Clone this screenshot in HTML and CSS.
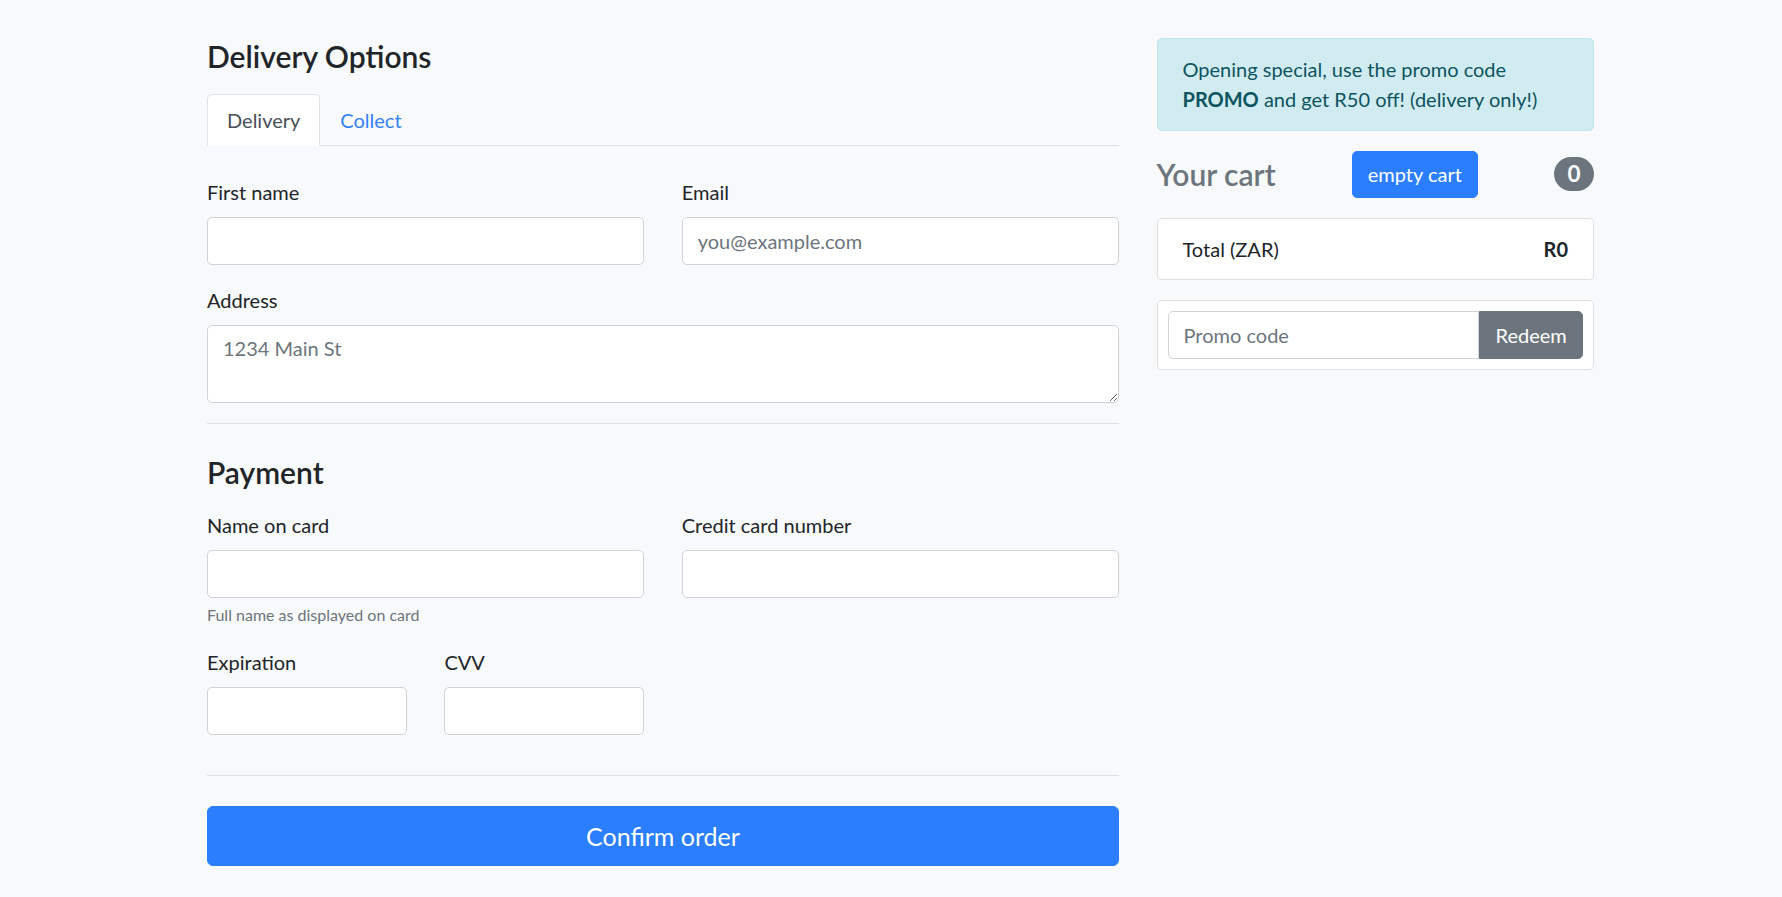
FILE: index.html
```html
<!DOCTYPE html>
<html lang="en">
<head>
<meta charset="utf-8">
<title>Checkout</title>
<link rel="stylesheet" href="styles.css">
</head>
<body>
<div class="page">
  <main class="main-col">
    <h4 class="section-title">Delivery Options</h4>
    <nav class="tabs">
      <a class="tab active">Delivery</a>
      <a class="tab">Collect</a>
    </nav>
    <form class="tab-content">
      <div class="row two">
        <div class="field">
          <label>First name</label>
          <input class="input" type="text">
        </div>
        <div class="field">
          <label>Email</label>
          <input class="input" type="email" placeholder="you@example.com">
        </div>
      </div>
      <div class="field">
        <label>Address</label>
        <textarea class="input textarea" rows="2" placeholder="1234 Main St"></textarea>
      </div>
      <hr class="divider">
      <h4 class="section-title">Payment</h4>
      <div class="row two">
        <div class="field">
          <label>Name on card</label>
          <input class="input" type="text">
          <small class="help">Full name as displayed on card</small>
        </div>
        <div class="field">
          <label>Credit card number</label>
          <input class="input" type="text">
        </div>
      </div>
      <div class="row four">
        <div class="field">
          <label>Expiration</label>
          <input class="input" type="text">
        </div>
        <div class="field">
          <label>CVV</label>
          <input class="input" type="text">
        </div>
      </div>
      <hr class="divider">
      <button class="btn btn-primary btn-lg" type="button">Confirm order</button>
    </form>
  </main>
  <aside class="side-col">
    <div class="alert">Opening special, use the promo code <strong>PROMO</strong> and get R50 off! (delivery only!)</div>
    <h4 class="cart-head">
      <span class="muted">Your cart</span>
      <button class="btn btn-primary" type="button">empty cart</button>
      <span class="badge">0</span>
    </h4>
    <ul class="list-group">
      <li class="list-item"><span>Total (ZAR)</span><strong>R0</strong></li>
    </ul>
    <div class="card">
      <div class="input-group">
        <input class="input promo" type="text" placeholder="Promo code">
        <button class="btn btn-secondary redeem" type="button">Redeem</button>
      </div>
    </div>
  </aside>
</div>
</body>
</html>
```
FILE: styles.css
```css
* { box-sizing: border-box; }
html, body { margin: 0; }
body {
  background: #f8f9fa;
  color: #212529;
  font-family: Lato, "Open Sans", "Noto Sans", sans-serif;
  font-size: 20px;
  line-height: 30px;
}
.page {
  display: grid;
  grid-template-columns: 912px 437.5px;
  column-gap: 37.5px;
  align-items: start;
  margin: 0 0 0 207px;
  padding-top: 38px;
  width: 1387px;
}
.section-title {
  margin: 0 0 20px;
  font-size: 30px;
  line-height: 36px;
  font-weight: 600;
}
.tabs {
  display: flex;
  border-bottom: 1px solid #dee2e6;
}
.tab {
  display: block;
  padding: 10px 19px;
  border: 1px solid transparent;
  border-radius: 5px 5px 0 0;
  margin-bottom: -1px;
  color: #3381f6;
  cursor: pointer;
}
.tab.active {
  color: #495057;
  background: #fff;
  border-color: #dee2e6 #dee2e6 #fff;
}
.tab-content { padding-top: 30.5px; }
.row { display: grid; column-gap: 37.5px; }
.row.two { grid-template-columns: 1fr 1fr; }
.row.four { grid-template-columns: 199.9px 199.9px; }
.field { margin-bottom: 20px; }
label { display: block; margin-bottom: 10px; }
.input {
  display: block;
  width: 100%;
  height: 48px;
  padding: 7.5px 15px;
  border: 1px solid #ced4da;
  border-radius: 5px;
  background: #fff;
  color: #495057;
  font: inherit;
  line-height: 30px;
}
.input::placeholder { color: #6c757d; opacity: 1; }
.textarea { height: 78px; resize: vertical; }
.help {
  display: block;
  margin-top: 5px;
  font-size: 16px;
  line-height: 24px;
  color: #6c757d;
}
.divider {
  border: 0;
  border-top: 1px solid rgba(0,0,0,.1);
  margin: 20px 0 30px;
  height: 0;
}
.btn {
  display: inline-block;
  padding: 7.5px 15px;
  border: 1px solid transparent;
  border-radius: 5px;
  font: inherit;
  font-size: 20px;
  line-height: 30px;
  color: #fff;
  cursor: pointer;
}
.btn-primary { background: #2b7fff; border-color: #2b7fff; }
.btn-secondary { background: #6c757d; border-color: #6c757d; }
.btn-lg {
  display: block;
  width: 100%;
  padding: 10px 20px;
  font-size: 25px;
  line-height: 38px;
  border-radius: 6px;
}
.alert {
  padding: 15px 25px 15.5px;
  margin-bottom: 20px;
  border: 1px solid #bee5eb;
  border-radius: 5px;
  background: #d1ecf1;
  color: #0c5460;
}
.alert strong { font-weight: 700; }
.cart-head {
  display: flex;
  justify-content: space-between;
  align-items: center;
  margin: 0 0 20px;
  font-size: 30px;
  line-height: 36px;
  font-weight: 600;
}
.muted { color: #6c757d; }
.cart-head .btn { font-weight: 400; }
.badge {
  display: inline-block;
  padding: 5.6px 13.5px;
  font-size: 22.5px;
  line-height: 22.5px;
  font-weight: 700;
  color: #fff;
  background: #6c757d;
  border-radius: 20px;
}
.list-group { list-style: none; margin: 0 0 20px; padding: 0; }
.list-item {
  display: flex;
  justify-content: space-between;
  padding: 15px 25px;
  background: #fff;
  border: 1px solid rgba(0,0,0,.125);
  border-radius: 5px;
}
.card {
  padding: 10px;
  background: #fff;
  border: 1px solid rgba(0,0,0,.125);
  border-radius: 5px;
}
.input-group { display: flex; }
.promo { flex: 1; border-radius: 5px 0 0 5px; }
.redeem { border-radius: 0 5px 5px 0; width: 103.7px; }
```
